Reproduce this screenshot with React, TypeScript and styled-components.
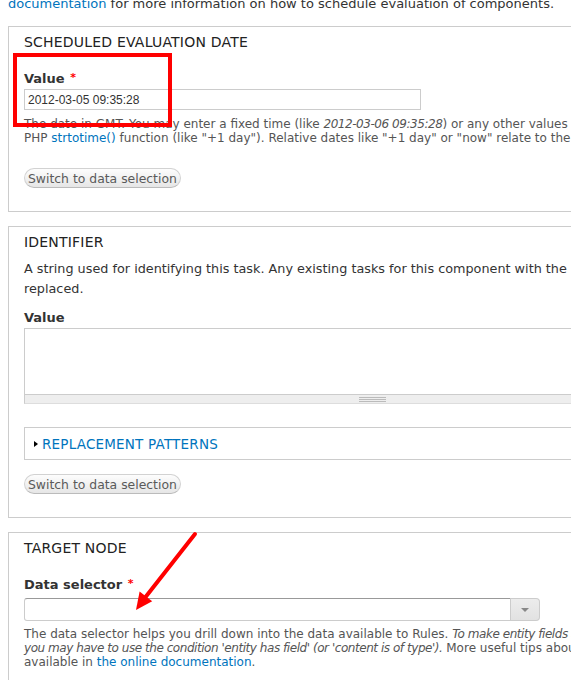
import React from 'react';
import styled, { createGlobalStyle } from 'styled-components';

const GlobalStyle = createGlobalStyle`
  html, body {
    margin: 0;
    padding: 0;
    background: #fff;
    overflow: hidden;
  }
  body {
    font-family: "DejaVu Sans", Verdana, sans-serif;
    font-size: 13px;
    color: #333;
  }
`;

const Page = styled.div`
  position: relative;
  width: 729px;
  height: 680px;
  padding: 0 8px;
  overflow: hidden;
`;

const Intro = styled.p`
  margin: -5px 0 13px;
  line-height: 18px;
  font-size: 13px;
  color: #333;
  white-space: nowrap;
`;

const Link = styled.a`
  color: #0074bd;
  text-decoration: none;
`;

const Fieldset = styled.section`
  position: relative;
  display: flex;
  flex-direction: column;
  align-items: flex-start;
  border: 1px solid #ccc;
  padding: 6px 15px 23px;
  margin-bottom: 14px;
`;

const Legend = styled.h2`
  margin: 0 0 8px;
  font-size: 14px;
  line-height: 18px;
  font-weight: normal;
  letter-spacing: 0.2px;
  text-transform: uppercase;
  color: #222;
`;

const FormItem = styled.div`
  align-self: stretch;
  margin-top: 11px;
`;

const Label = styled.label`
  display: block;
  margin-bottom: 2px;
  font-size: 13px;
  line-height: 16px;
  font-weight: bold;
  color: #333;
`;

const Required = styled.span`
  color: #f00;
  font-size: 11px;
  vertical-align: 2px;
  margin-left: 1px;
`;

const TextInput = styled.input`
  box-sizing: border-box;
  display: block;
  width: 397px;
  height: 21px;
  padding: 0 3px;
  border: 1px solid #ccc;
  font-family: "Liberation Sans", Arial, sans-serif;
  font-size: 12px;
  color: #333;
  background: #fff;
`;

const Description = styled.div<{ $size?: number; $line?: number; $top?: number }>`
  margin-top: ${p => p.$top ?? 7}px;
  font-size: ${p => p.$size ?? 12}px;
  line-height: ${p => p.$line ?? 14}px;
  color: ${p => (p.$size ?? 12) > 12 ? '#333' : '#555'};
  white-space: nowrap;

  em {
    letter-spacing: -0.45px;
  }
`;

const SwitchButton = styled.button<{ $gap: number }>`
  display: block;
  margin-top: ${p => p.$gap}px;
  height: 20px;
  padding: 0 3px;
  border: 1px solid #d2d2d2;
  border-bottom-color: #bbb;
  border-radius: 10px;
  background: linear-gradient(#fdfdfd, #e6e6e6);
  font-family: "DejaVu Sans", Verdana, sans-serif;
  font-size: 12.4px;
  color: #5a5a5a;
`;

const TextArea = styled.textarea`
  box-sizing: border-box;
  display: block;
  width: 100%;
  height: 66px;
  margin: 0;
  border: 1px solid #ccc;
  border-bottom: 0;
  resize: none;
  font-family: "Liberation Sans", Arial, sans-serif;
`;

const Grippie = styled.div`
  box-sizing: border-box;
  height: 10px;
  border: 1px solid #ccc;
  border-bottom-color: #ddd;
  background: #eee;
  display: flex;
  justify-content: center;
  align-items: center;

  &::after {
    content: '';
    width: 27px;
    height: 5px;
    background: repeating-linear-gradient(#bbb 0 1px, transparent 1px 2px);
  }
`;

const InnerFieldset = styled.div`
  align-self: stretch;
  margin-top: 23px;
  border: 1px solid #ccc;
  padding: 7px 10px 6px 9px;
  display: flex;
  align-items: center;
  gap: 4px;
`;

const Caret = styled.span`
  width: 0;
  height: 0;
  border-top: 3px solid transparent;
  border-bottom: 3px solid transparent;
  border-left: 4px solid #000;
`;

const Toggle = styled.a`
  font-size: 13.5px;
  line-height: 18px;
  text-transform: uppercase;
  color: #0074bd;
  text-decoration: none;
  letter-spacing: 0.2px;
`;

const SelectRow = styled.div`
  display: flex;
  margin-top: 5px;
`;

const SelectField = styled.input`
  box-sizing: border-box;
  width: 487px;
  height: 23px;
  border: 1px solid #ccc;
  border-top-color: #999;
  border-radius: 3px 0 0 3px;
  background: #fff;
`;

const SelectButton = styled.span`
  box-sizing: border-box;
  width: 29px;
  height: 23px;
  border: 1px solid #ccc;
  border-left: 0;
  border-radius: 0 4px 4px 0;
  background: linear-gradient(#ececec, #e2e2e2);
  display: flex;
  align-items: center;
  justify-content: center;

  &::after {
    content: '';
    border-left: 4px solid transparent;
    border-right: 4px solid transparent;
    border-top: 4px solid #888;
  }
`;

const Highlight = styled.div`
  position: absolute;
  left: 4px;
  top: 26px;
  width: 159px;
  height: 74px;
  box-sizing: border-box;
  border: 4px solid #f00;
  pointer-events: none;
`;

const Arrow = styled.svg`
  position: absolute;
  left: 100px;
  top: 520px;
  overflow: visible;
  pointer-events: none;
`;

export default function App() {
  return (
    <Page>
      <GlobalStyle />
      <Intro>
        <Link href="#">documentation</Link> for more information on how to schedule evaluation of components.
      </Intro>

      <Fieldset>
        <Legend>Scheduled evaluation date</Legend>
        <FormItem>
          <Label>Value <Required>*</Required></Label>
          <TextInput defaultValue="2012-03-05 09:35:28" />
          <Description>
            The date in GMT. You may enter a fixed time (like <em>2012-03-06 09:35:28</em>) or any other values in GMT known by the
            <br />
            PHP <Link href="#">strtotime()</Link> function (like "+1 day"). Relative dates like "+1 day" or "now" relate to the evaluation time.
          </Description>
        </FormItem>
        <SwitchButton $gap={23}>Switch to data selection</SwitchButton>
        <Highlight />
      </Fieldset>

      <Fieldset>
        <Legend>Identifier</Legend>
        <Description $size={12.8} $line={20} $top={0}>
          A string used for identifying this task. Any existing tasks for this component with the same identifier will be
          <br />
          replaced.
        </Description>
        <FormItem>
          <Label>Value</Label>
          <TextArea />
          <Grippie />
        </FormItem>
        <InnerFieldset>
          <Caret />
          <Toggle href="#">Replacement patterns</Toggle>
        </InnerFieldset>
        <SwitchButton $gap={14}>Switch to data selection</SwitchButton>
      </Fieldset>

      <Fieldset>
        <Legend>Target node</Legend>
        <FormItem>
          <Label>Data selector <Required>*</Required></Label>
          <SelectRow>
            <SelectField />
            <SelectButton />
          </SelectRow>
          <Description $top={6}>
            The data selector helps you drill down into the data available to Rules. <em>To make entity fields appear in the data selector,</em>
            <br />
            <em>you may have to use the condition 'entity has field' (or 'content is of type').</em> More useful tips about data selection is
            <br />
            available in <Link href="#">the online documentation</Link>.
          </Description>
        </FormItem>
      </Fieldset>

      <Arrow width="100" height="100" viewBox="100 520 100 100">
        <line x1="195" y1="534" x2="144" y2="599" stroke="#f00" strokeWidth="4" strokeLinecap="round" />
        <polygon points="136,610 139.6,591.5 152.2,601.3" fill="#f00" />
      </Arrow>
    </Page>
  );
}
